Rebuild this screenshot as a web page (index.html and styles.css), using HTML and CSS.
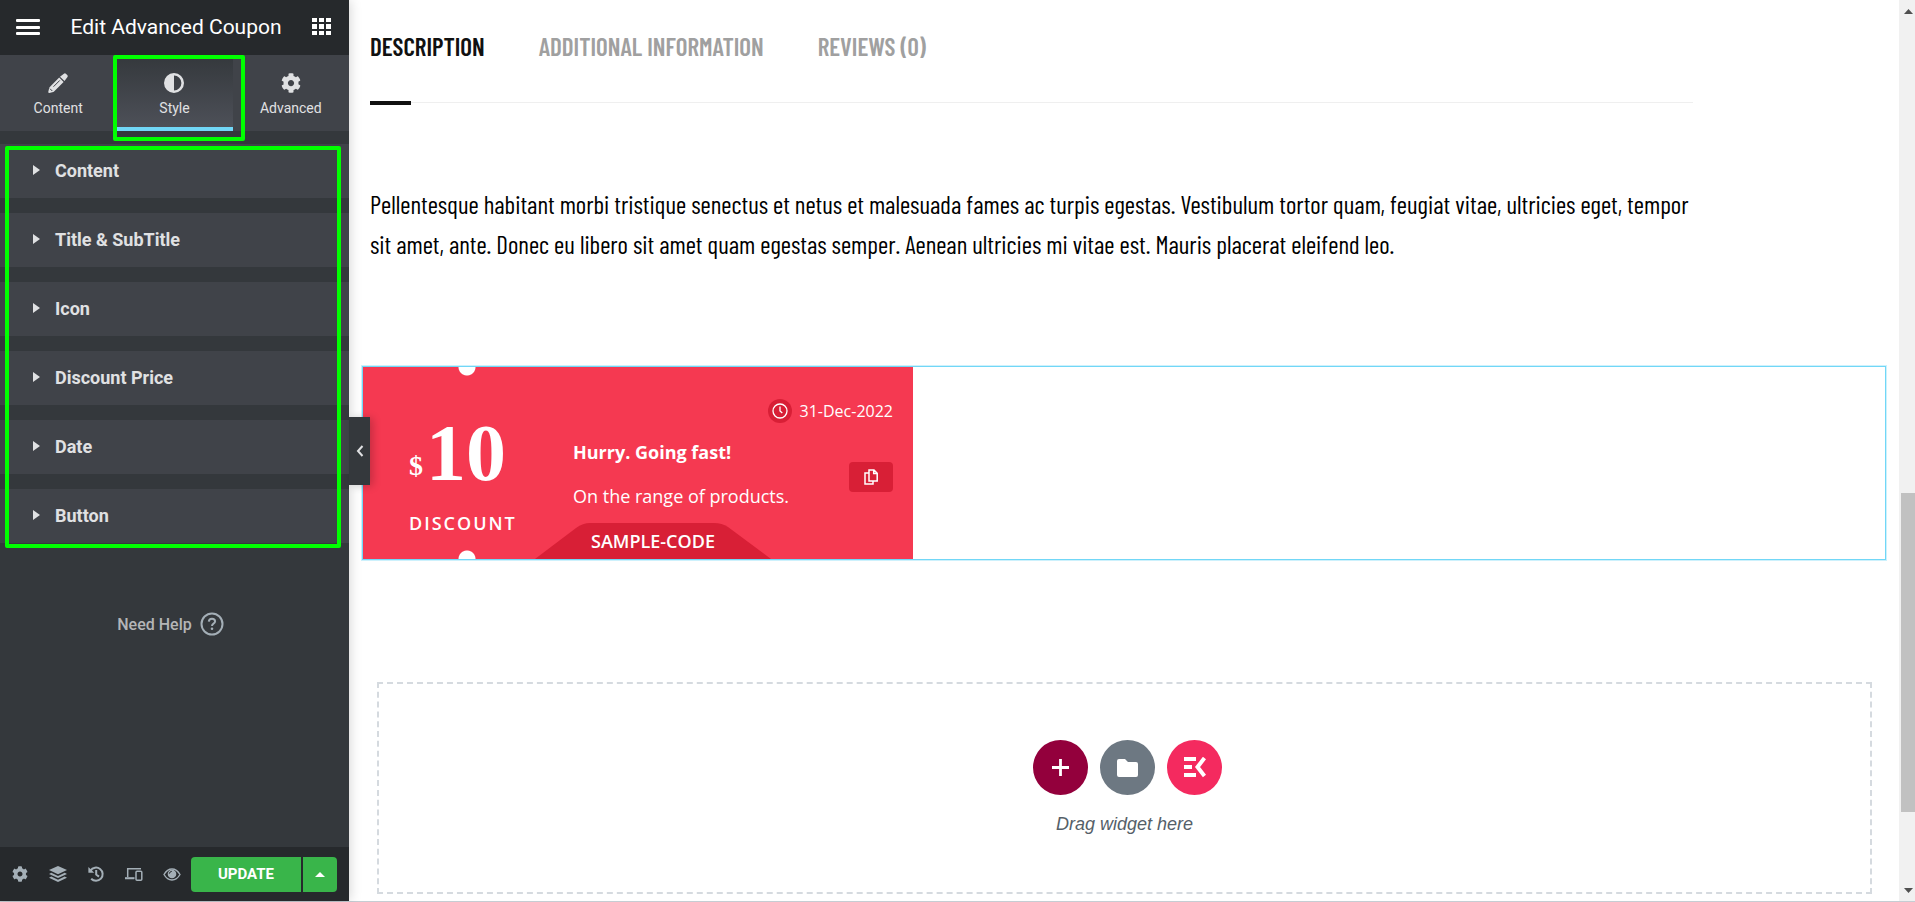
FILE: index.html
```html
<!DOCTYPE html>
<html lang="en">
<head>
    <meta charset="UTF-8">
    <meta name="viewport" content="width=device-width, initial-scale=1.0">
    <title>Edit Advanced Coupon</title>
    <link rel="stylesheet" href="styles.css">
</head>
<body>
    <!-- icon shapes used more than once -->
    <svg class="sprite" aria-hidden="true">
        <symbol id="icon-cog" viewBox="0 0 512 512">
            <path d="M487.4 315.7l-42.6-24.6c4.3-23.2 4.3-47 0-70.2l42.6-24.6c4.9-2.8 7.1-8.6 5.5-14-11.1-35.6-30-67.8-54.7-94.6-3.8-4.1-10-5.1-14.8-2.3L380.8 110c-17.9-15.4-38.5-27.3-60.8-35.1V25.8c0-5.6-3.9-10.5-9.4-11.7-36.7-8.2-74.3-7.8-109.2 0-5.5 1.2-9.4 6.1-9.4 11.7V75c-22.2 7.9-42.8 19.8-60.8 35.1L88.7 85.5c-4.9-2.8-11-1.9-14.8 2.3-24.7 26.7-43.6 58.9-54.7 94.6-1.7 5.4.6 11.2 5.5 14L67.3 221c-4.3 23.2-4.3 47 0 70.2l-42.6 24.6c-4.9 2.8-7.1 8.6-5.5 14 11.1 35.6 30 67.8 54.7 94.6 3.8 4.1 10 5.1 14.8 2.3l42.6-24.6c17.9 15.4 38.5 27.3 60.8 35.1v49.2c0 5.6 3.9 10.5 9.4 11.7 36.7 8.2 74.3 7.8 109.2 0 5.5-1.2 9.4-6.1 9.4-11.7v-49.2c22.2-7.9 42.8-19.8 60.8-35.1l42.6 24.6c4.9 2.8 11 1.9 14.8-2.3 24.7-26.7 43.6-58.9 54.7-94.6 1.5-5.5-.7-11.3-5.6-14.1zM256 336c-44.1 0-80-35.9-80-80s35.9-80 80-80 80 35.9 80 80-35.9 80-80 80z"/>
        </symbol>
        <symbol id="icon-caret" viewBox="0 0 7 10">
            <path d="M0 0l7 5-7 5z"/>
        </symbol>
    </svg>

    <div class="editor">
        <aside class="panel">
            <header class="panel-header">
                <button class="icon-btn" aria-label="Menu">
                    <svg width="24" height="16" viewBox="0 0 24 16"><g fill="#fff"><rect width="24" height="3" rx="1"/><rect y="7" width="24" height="3" rx="1"/><rect y="13" width="24" height="3" rx="1"/></g></svg>
                </button>
                <h1>Edit Advanced Coupon</h1>
                <button class="icon-btn" aria-label="Widgets">
                    <svg width="19" height="17" viewBox="0 0 19 17"><path fill="#fff" d="M0 0h5v4H0zM7 0h5v4H7zM14 0h5v4h-5zM0 6h5v5H0zM7 6h5v5H7zM14 6h5v5h-5zM0 13h5v4H0zM7 13h5v4H7zM14 13h5v4h-5z"/></svg>
                </button>
            </header>

            <nav class="panel-tabs">
                <button class="panel-tab">
                    <svg width="20" height="20" viewBox="0 0 20 20"><path d="M12 3.800L15.900 .7Q17 -.1 18.100 .9L19.200 2Q20.200 3.200 19.300 4.200L16.500 8zM11.200 4.600L15.600 8.900 6.300 18.300Q5.800 18.800 5.200 18.900L1.300 19.900Q.1 20 .3 18.700L1.200 14.900Q1.400 14.400 1.800 14z"/><path d="M5.500 13.700L11.800 7.400M2 15.700L4.300 18" stroke="#404349" fill="none"/></svg>
                    Content
                </button>
                <button class="panel-tab active">
                    <svg width="20" height="20" viewBox="0 0 20 20"><path fill-rule="evenodd" d="M10 0a10 10 0 1 1 0 20a10 10 0 1 1 0-20zM10 2.600v14.800a7.400 7.400 0 1 0 0-14.800z"/></svg>
                    Style
                </button>
                <button class="panel-tab">
                    <svg width="20" height="20"><use href="#icon-cog"/></svg>
                    Advanced
                </button>
            </nav>

            <div class="panel-sections">
                <button class="section-toggle"><svg width="7" height="10"><use href="#icon-caret"/></svg>Content</button>
                <button class="section-toggle"><svg width="7" height="10"><use href="#icon-caret"/></svg>Title &amp; SubTitle</button>
                <button class="section-toggle"><svg width="7" height="10"><use href="#icon-caret"/></svg>Icon</button>
                <button class="section-toggle"><svg width="7" height="10"><use href="#icon-caret"/></svg>Discount Price</button>
                <button class="section-toggle"><svg width="7" height="10"><use href="#icon-caret"/></svg>Date</button>
                <button class="section-toggle"><svg width="7" height="10"><use href="#icon-caret"/></svg>Button</button>
            </div>

            <a class="need-help" href="#">
                Need Help
                <svg width="24" height="24" viewBox="0 0 24 24" fill="none" stroke="#a4afb7" stroke-width="2"><circle cx="12" cy="12" r="10.500"/><path d="M8.800 9.600Q9 6.700 12 6.700T15.100 9.300Q15.100 10.700 13.500 11.600Q12 12.500 12 14"/><circle cx="12" cy="16.800" r="1.300" fill="#a4afb7" stroke="none"/></svg>
            </a>

            <footer class="panel-footer">
                <button class="tool" aria-label="Settings"><svg width="16" height="16"><use href="#icon-cog"/></svg></button>
                <button class="tool" aria-label="Navigator">
                    <svg width="18" height="16" viewBox="0 0 18 16"><path d="M9 0l9 4-9 4.200L0 4zM2.300 6.800L9 9.900l6.700-3.100L18 7.900 9 12.100 0 7.900zM2.300 10.600L9 13.700l6.700-3.100L18 11.700 9 16 0 11.700z"/></svg>
                </button>
                <button class="tool" aria-label="History">
                    <svg width="16" height="16" viewBox="0 0 16 16" fill="none" stroke="#a4afb7" stroke-width="2"><path d="M2.500 4.600A6.600 6.600 0 1 1 3.200 12.700M8.200 4v4.600l2.800 2"/><path d="M.4 1v5.800h5.800z" fill="#a4afb7" stroke="none"/></svg>
                </button>
                <button class="tool" aria-label="Responsive mode">
                    <svg width="18" height="15" viewBox="0 0 18 15" fill="none" stroke="#a4afb7" stroke-width="1.500"><path d="M2.700 10V1.800H16M0 11.600h9.200"/><rect x="11" y="4.300" width="5.800" height="9" rx="1"/><path d="M0 11h9.500"/></svg>
                </button>
                <button class="tool" aria-label="Preview">
                    <svg width="18" height="13" viewBox="0 0 18 13"><path d="M1 6.500Q4.200 1 9 1t8 5.500Q13.800 12 9 12T1 6.500z" fill="none" stroke="#a4afb7" stroke-width="1.400"/><circle cx="9" cy="6" r="4.300"/><path d="M6.300 5.700Q6.600 3.500 8.800 3.300" fill="none" stroke="#26292c"/></svg>
                </button>
                <div class="save-group">
                    <button class="update-btn">UPDATE</button>
                    <button class="update-more" aria-label="Save options"><svg width="10" height="5" viewBox="0 0 10 5"><path fill="#fff" d="M5 0l5 5H0z"/></svg></button>
                </div>
            </footer>

            <button class="collapse-btn" aria-label="Hide panel">
                <svg width="8" height="12" viewBox="0 0 8 12"><path d="M6.500 1L2 6l4.500 5" fill="none" stroke="#e0e1e3" stroke-width="2"/></svg>
            </button>
            <div class="mark mark-tab"></div>
            <div class="mark mark-sections"></div>
        </aside>

        <main class="preview">
            <div class="product">
                <nav class="product-tabs">
                    <a class="active" href="#">DESCRIPTION</a>
                    <a href="#">ADDITIONAL INFORMATION</a>
                    <a href="#">REVIEWS (0)</a>
                </nav>
                <p class="product-text">Pellentesque habitant morbi tristique senectus et netus et malesuada fames ac turpis egestas. Vestibulum tortor quam, feugiat vitae, ultricies eget, tempor sit amet, ante. Donec eu libero sit amet quam egestas semper. Aenean ultricies mi vitae est. Mauris placerat eleifend leo.</p>
            </div>

            <section class="widget">
                <div class="coupon">
                    <div class="coupon-price">
                        <div class="amount"><span class="currency">$</span>10</div>
                        <div class="discount">DISCOUNT</div>
                    </div>
                    <div class="coupon-info">
                        <h2>Hurry. Going fast!</h2>
                        <p>On the range of products.</p>
                    </div>
                    <div class="coupon-side">
                        <div class="date">
                            <svg width="24" height="24" viewBox="0 0 24 24"><circle cx="12" cy="12" r="12" fill="#d81f36"/><circle cx="12" cy="12" r="7" fill="none" stroke="#fff" stroke-width="1.300"/><path d="M12 7.500V12l2.300 2" fill="none" stroke="#fff" stroke-width="1.300"/></svg>
                            31-Dec-2022
                        </div>
                        <button class="copy-btn" aria-label="Copy code">
                            <svg width="14" height="16" viewBox="0 0 14 16" fill="none" stroke="#fff" stroke-width="1.500"><path d="M5 1h5l3.200 3.200V12H5zM9.700 1v3.500h3.500M5 4H1v11h8v-3"/></svg>
                        </button>
                    </div>
                    <div class="coupon-code">
                        <svg width="236" height="36" viewBox="0 0 236 36"><path fill="#d81f36" d="M0 36L41 5Q48 0 55 0H179Q187 0 193 4L236 36z"/></svg>
                        <span>SAMPLE-CODE</span>
                    </div>
                </div>
            </section>

            <section class="drop-area">
                <div class="drop-actions">
                    <button class="round add" aria-label="Add section">
                        <svg width="17" height="17" viewBox="0 0 17 17"><path d="M8.500 0v17M0 8.500h17" stroke="#fff" stroke-width="2.800"/></svg>
                    </button>
                    <button class="round folder" aria-label="Add template">
                        <svg width="21" height="18" viewBox="0 0 21 18"><path fill="#fff" d="M2 0h6l3 3h8a2 2 0 0 1 2 2v11a2 2 0 0 1-2 2H2a2 2 0 0 1-2-2V2a2 2 0 0 1 2-2z"/></svg>
                    </button>
                    <button class="round kit" aria-label="ElementsKit">
                        <svg width="22" height="21" viewBox="0 0 22 21"><path fill="#fff" d="M0 0h12v4H0zM0 8h8v4H0zM0 16h12v4H0z"/><path d="M20.500 1L13.500 10l7 9" fill="none" stroke="#fff" stroke-width="4"/></svg>
                    </button>
                </div>
                <p>Drag widget here</p>
            </section>
        </main>

        <div class="scrollbar" aria-hidden="true">
            <svg width="9" height="5" viewBox="0 0 9 5"><path fill="#505050" d="M4.500 0L9 5H0z"/></svg>
            <div class="scroll-track"><div class="scroll-thumb"></div></div>
            <svg width="9" height="5" viewBox="0 0 9 5"><path fill="#505050" d="M0 0h9L4.500 5z"/></svg>
        </div>
    </div>
</body>
</html>
```

FILE: styles.css
```css
* {
    box-sizing: border-box;
}
body {
    margin: 0;
    font-family: Roboto, "Liberation Sans", sans-serif;
    background-color: #fff;
}
h1, h2, p {
    margin: 0;
}
button {
    padding: 0;
    border: none;
    background: none;
    color: inherit;
    font-family: inherit;
    cursor: pointer;
}
svg {
    display: block;
    flex: none;
}
a {
    text-decoration: none;
}
.sprite {
    position: absolute;
    width: 0;
    height: 0;
}
.editor {
    display: flex;
    min-height: 100vh;
    border-bottom: 1px solid #c6cdd3;
}

/* left panel */
.panel {
    position: relative;
    display: flex;
    flex-direction: column;
    flex: none;
    width: 349px;
    background-color: #34383c;
    color: #e0e1e3;
    box-shadow: 0 0 12px rgba(0, 0, 0, 0.2);
}
.panel-header {
    display: flex;
    align-items: center;
    justify-content: space-between;
    height: 55px;
    padding: 0 18px 2px 16px;
    background-color: #26292c;
    color: #fff;
}
.panel-header h1 {
    font-size: 21px;
    font-weight: 400;
}
.panel-tabs {
    display: grid;
    grid-template-columns: repeat(3, 1fr);
    height: 76px;
    background-color: #404349;
}
.panel-tab {
    display: flex;
    flex-direction: column;
    align-items: center;
    gap: 6px;
    padding-top: 18px;
    border-bottom: 4px solid transparent;
    font-size: 14px;
    line-height: 18px;
    fill: #e0e1e3;
}
.panel-tab.active {
    background: linear-gradient(#34383c, #4d5058) padding-box;
    border-color: #71d7f7;
}
.panel-sections {
    display: flex;
    flex-direction: column;
    gap: 15px;
    padding-top: 13px;
}
.section-toggle {
    display: flex;
    align-items: center;
    gap: 15px;
    height: 54px;
    padding: 0 0 2px 33px;
    background-color: #404349;
    font-size: 18px;
    font-weight: 700;
    fill: #e0e1e3;
}
.need-help {
    display: flex;
    align-items: center;
    justify-content: center;
    gap: 8px;
    margin: 69px 8px 0 0;
    color: #b4b5b7;
    font-size: 16px;
    font-weight: 500;
}
.panel-footer {
    display: flex;
    align-items: center;
    height: 54px;
    margin-top: auto;
    padding-left: 1px;
    background-color: #26292c;
}
.tool {
    display: flex;
    justify-content: center;
    width: 38px;
    fill: #a4afb7;
}
.save-group {
    display: flex;
    gap: 2px;
    height: 35px;
}
.update-btn, .update-more {
    background-color: #39b54a;
    color: #fff;
}
.update-btn {
    width: 110px;
    border-radius: 4px 0 0 4px;
    font-size: 15px;
    font-weight: 700;
}
.update-more {
    display: flex;
    align-items: center;
    justify-content: center;
    width: 34px;
    border-radius: 0 4px 4px 0;
}
.collapse-btn {
    position: absolute;
    top: 417px;
    left: 100%;
    z-index: 2;
    display: flex;
    align-items: center;
    justify-content: center;
    width: 21px;
    height: 68px;
    background-color: #34383c;
    box-shadow: 3px 1px 8px rgba(0, 0, 0, 0.2);
}

/* highlight boxes over the panel */
.mark {
    position: absolute;
    border: 4px solid #00ff00;
    border-radius: 2px;
    pointer-events: none;
}
.mark-tab {
    top: 55px;
    left: 113px;
    width: 132px;
    height: 86px;
}
.mark-sections {
    top: 146px;
    left: 5px;
    width: 336px;
    height: 402px;
}

/* page preview */
.preview {
    flex: 1;
    padding: 32px 13px 7px;
}
.product {
    max-width: 1331px;
    padding-left: 8px;
    font-family: "Barlow Condensed", "Liberation Sans Narrow", Roboto, sans-serif;
}
.product-tabs {
    position: relative;
    display: flex;
    gap: 54px;
    padding-bottom: 42px;
    border-bottom: 1px solid #efefef;
    font-size: 25px;
    font-weight: 600;
    line-height: 28px;
}
.product-tabs a {
    color: #a0a0a0;
}
.product-tabs .active {
    color: #111;
}
.product-tabs::after {
    content: "";
    position: absolute;
    left: 0;
    bottom: -3px;
    width: 41px;
    height: 4px;
    background-color: #111;
}
.product-text {
    margin-top: 81px;
    color: #000;
    font-size: 25px;
    line-height: 40px;
}
.widget {
    margin-top: 102px;
    border: 1px solid #71d7f7;
    box-shadow: 0 0 0 1px #cdf1fc;
}

/* coupon card */
.coupon {
    position: relative;
    display: flex;
    width: 550px;
    height: 192px;
    background: radial-gradient(circle at 104px 0, #fff 8px, transparent 9px),
        radial-gradient(circle at 104px 100%, #fff 8px, transparent 9px),
        #f53951;
    color: #fff;
    font-family: "Open Sans", sans-serif;
}
.coupon-price {
    width: 210px;
    padding: 40px 0 0 46px;
}
.amount {
    display: flex;
    align-items: flex-end;
    gap: 3px;
    font-family: "Liberation Serif", serif;
    font-size: 80px;
    font-weight: 700;
    line-height: 92px;
}
.currency {
    font-size: 28px;
    line-height: 66px;
}
.discount {
    margin-top: 12px;
    font-size: 18px;
    font-weight: 600;
    letter-spacing: 2px;
    line-height: 24px;
}
.coupon-info {
    padding-top: 72px;
}
.coupon-info h2 {
    font-size: 18px;
    font-weight: 700;
    line-height: 26px;
}
.coupon-info p {
    margin-top: 18px;
    font-size: 18px;
    line-height: 26px;
}
.coupon-side {
    position: absolute;
    top: 32px;
    right: 20px;
    display: flex;
    flex-direction: column;
    align-items: flex-end;
    gap: 39px;
}
.date {
    display: flex;
    align-items: center;
    gap: 8px;
    font-size: 16px;
    line-height: 24px;
    white-space: nowrap;
}
.copy-btn {
    display: flex;
    align-items: center;
    justify-content: center;
    width: 44px;
    height: 30px;
    border-radius: 4px;
    background-color: #d81f36;
}
.coupon-code {
    position: absolute;
    left: 172px;
    bottom: 0;
    display: grid;
    place-items: center;
    font-size: 18px;
    font-weight: 600;
    line-height: 36px;
}
.coupon-code svg, .coupon-code span {
    grid-area: 1 / 1;
}

/* empty section */
.drop-area {
    display: flex;
    flex-direction: column;
    align-items: center;
    margin: 122px 14px 0 15px;
    padding: 56px 0;
    border: 2px dashed #d5dadf;
    color: #556068;
    font-family: "Liberation Sans", Arial, sans-serif;
    font-size: 18px;
    font-style: italic;
    line-height: 24px;
}
.drop-actions {
    display: flex;
    gap: 12px;
    margin-bottom: 17px;
    padding-left: 6px;
}
.round {
    display: flex;
    align-items: center;
    justify-content: center;
    width: 55px;
    height: 55px;
    border-radius: 50%;
}
.add {
    background-color: #93003c;
}
.folder {
    background-color: #6d7882;
}
.kit {
    background-color: #f42a5f;
}

/* page scrollbar */
.scrollbar {
    display: flex;
    flex-direction: column;
    align-items: center;
    flex: none;
    width: 16px;
    padding: 9px 0 8px 2px;
    background-color: #f1f1f1;
}
.scroll-track {
    display: flex;
    flex-direction: column;
    justify-content: flex-end;
    flex: 1;
    width: 100%;
    padding-bottom: 76px;
}
.scroll-thumb {
    height: 40%;
    background-color: #c1c1c1;
}
```
